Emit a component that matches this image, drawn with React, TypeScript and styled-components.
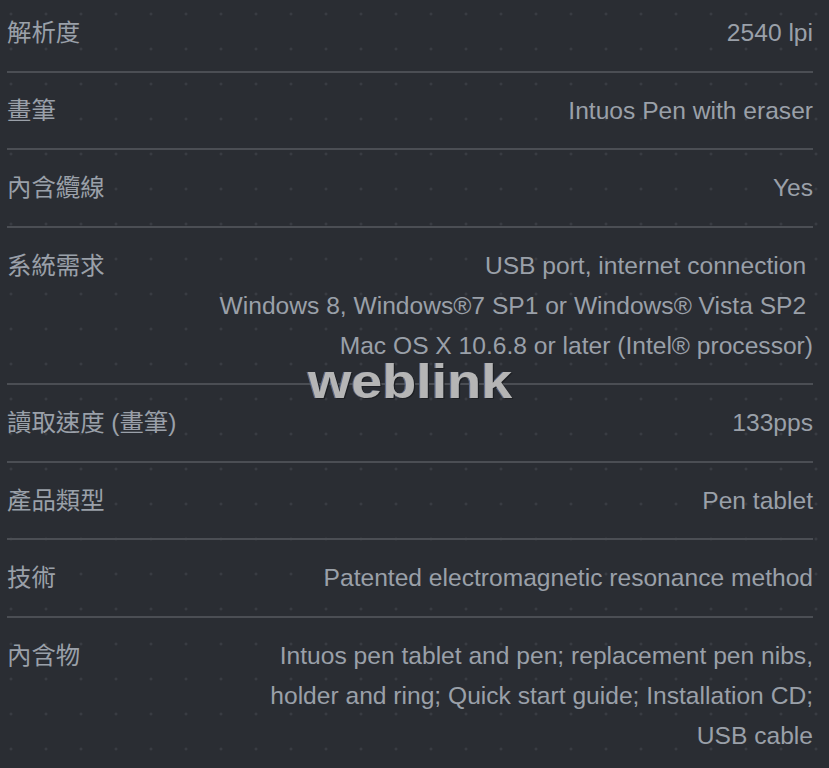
import styled, { createGlobalStyle } from "styled-components"

const GlobalStyle = createGlobalStyle`
    html, body {
        margin: 0;
        padding: 0;
    }
    body {
        background-color: #2a2d33;
        background-image: radial-gradient(circle, #42454c 0.9px, transparent 1.3px);
        background-size: 35px 35px;
        background-position: -6.5px -3.5px;
        font-family: "Liberation Sans", "Noto Sans CJK TC", Arial, sans-serif;
        color: #9aa0a9;
        min-height: 768px;
        overflow: hidden;
    }
`

const Page = styled.div`
    position: relative;
    padding: 0 16px 0 7px;
`

const SpecRow = styled.div`
    display: flex;
    justify-content: space-between;
    align-items: flex-start;
    gap: 24px;
    padding: 17.75px 0;
    border-bottom: 2px solid #4b4e54;

    &:first-child {
        padding-top: 13px;
    }

    &:last-child {
        border-bottom: none;
    }
`

const Label = styled.div`
    font-size: 24.4px;
    line-height: 40px;
    white-space: nowrap;
`

const Value = styled.div`
    font-size: 24.6px;
    line-height: 40px;
    text-align: right;
`

const Watermark = styled.div`
    position: absolute;
    left: 308px;
    top: 354px;
    font-family: "Liberation Sans", Arial, sans-serif;
    font-weight: bold;
    font-size: 48px;
    line-height: 56px;
    color: #b5b5b5;
    transform: scaleX(1.16);
    transform-origin: left top;
    text-shadow: 1px 1px 0 #1e2024, -1px 0 0 #5a6a8a;
    pointer-events: none;
`

interface Spec {
    label: string;
    lines: string[];
}

const specs: Spec[] = [
    { label: "解析度", lines: ["2540 lpi"] },
    { label: "畫筆", lines: ["Intuos Pen with eraser"] },
    { label: "內含纜線", lines: ["Yes"] },
    {
        label: "系統需求",
        lines: [
            "USB port, internet connection\u00a0",
            "Windows 8, Windows®7 SP1 or Windows® Vista SP2\u00a0",
            "Mac OS X 10.6.8 or later (Intel® processor)",
        ],
    },
    { label: "讀取速度 (畫筆)", lines: ["133pps"] },
    { label: "產品類型", lines: ["Pen tablet"] },
    { label: "技術", lines: ["Patented electromagnetic resonance method"] },
    {
        label: "內含物",
        lines: [
            "Intuos pen tablet and pen; replacement pen nibs,",
            "holder and ring; Quick start guide; Installation CD;",
            "USB cable",
        ],
    },
]

export default function App() {
    return (
        <>
            <GlobalStyle />
            <Page>
                {specs.map((spec) => (
                    <SpecRow key={spec.label}>
                        <Label>{spec.label}</Label>
                        <Value>
                            {spec.lines.map((line, i) => (
                                <div key={i}>{line}</div>
                            ))}
                        </Value>
                    </SpecRow>
                ))}
                <Watermark>weblink</Watermark>
            </Page>
        </>
    )
}
